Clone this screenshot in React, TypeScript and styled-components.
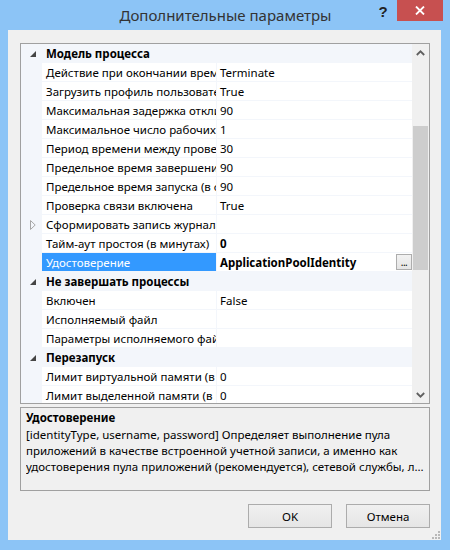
import React from "react";
import styled, { createGlobalStyle, css } from "styled-components";

const Global = createGlobalStyle`
  html, body { margin: 0; padding: 0; background: #ffffff; }
  * { box-sizing: border-box; }
`;

const UI_FONT = `"Noto Sans", "Open Sans", "DejaVu Sans", sans-serif`;

const Window = styled.div`
  width: 450px;
  height: 550px;
  background: #8cc4f6;
  display: flex;
  flex-direction: column;
  font-family: ${UI_FONT};
  color: #000;
`;

const TitleBar = styled.div`
  height: 30px;
  display: grid;
  grid-template-columns: 1fr auto 1fr;
  align-items: start;
  padding: 0 7px 0 8px;
`;

const TitleText = styled.div`
  font-size: 15px;
  line-height: 30px;
  color: #333333;
  white-space: nowrap;
`;

const TitleButtons = styled.div`
  display: flex;
  justify-content: flex-end;
  align-items: flex-start;
`;

const HelpButton = styled.div`
  width: 16px;
  margin-right: 6px;
  margin-top: 3px;
  font-size: 15px;
  font-weight: 700;
  line-height: 18px;
  color: #222;
  text-align: center;
  font-family: "Liberation Sans", Arial, sans-serif;
`;

const CloseButton = styled.div`
  width: 46px;
  height: 21px;
  background: #c75050;
  display: flex;
  align-items: center;
  justify-content: center;
`;

const Client = styled.div`
  position: relative;
  flex: 1;
  margin: 0 9px 10px 8px;
  background: #f0f0f0;
  padding: 13px 11px 12px 12px;
  display: flex;
  flex-direction: column;
`;

const Grid = styled.div`
  height: 361px;
  border: 1px solid #a0a0a0;
  display: flex;
  background: #ffffff;
`;

const Rows = styled.div`
  flex: 1;
  overflow: hidden;
  font-size: 11.5px;
`;

const LINE = "#f3f6fb";

const Row = styled.div`
  height: 19px;
  display: grid;
  grid-template-columns: 21px 175px 1fr;
  background: #ffffff;
`;

const CategoryRowBox = styled.div`
  height: 19px;
  display: grid;
  grid-template-columns: 21px 1fr;
  background: ${LINE};
`;

const Gutter = styled.div`
  background: ${LINE};
  display: flex;
  align-items: center;
  padding-left: 9px;
`;

const CategoryLabel = styled.div`
  font-weight: 700;
  padding: 1px 0 0 4px;
  line-height: 17px;
  white-space: nowrap;
  overflow: hidden;
`;

const NameCell = styled.div<{ $selected?: boolean }>`
  border-bottom: 1px solid ${LINE};
  border-right: 1px solid ${LINE};
  padding: 1px 0 0 4px;
  line-height: 17px;
  white-space: nowrap;
  overflow: hidden;
  ${(p) =>
    p.$selected &&
    css`
      background: #3399ff;
      color: #ffffff;
    `}
`;

const ValueCell = styled.div<{ $bold?: boolean }>`
  border-bottom: 1px solid ${LINE};
  padding: 1px 0 0 3px;
  line-height: 17px;
  white-space: nowrap;
  overflow: hidden;
  display: flex;
  align-items: center;
  justify-content: space-between;
  font-weight: ${(p) => (p.$bold ? 700 : 400)};
`;

const EllipsisButton = styled.div`
  width: 16px;
  height: 16px;
  margin-top: -1px;
  border: 1px solid #adadad;
  background: linear-gradient(#f2f2f2, #e5e5e5);
  font-size: 10px;
  font-weight: 400;
  line-height: 14px;
  text-align: center;
  color: #000;
  letter-spacing: -0.5px;
`;

const ScrollBar = styled.div`
  width: 17px;
  background: #f0f0f0;
  display: flex;
  flex-direction: column;
`;

const ScrollArrow = styled.div`
  height: 17px;
  display: flex;
  align-items: center;
  justify-content: center;
`;

const ScrollTrack = styled.div`
  flex: 1;
  display: flex;
  flex-direction: column;
`;

const Thumb = styled.div`
  margin: 65px 0 0 1px;
  width: 15px;
  height: 144px;
  background: #cdcdcd;
`;

const Description = styled.div`
  margin-top: 3px;
  height: 84px;
  border: 1px solid #a0a0a0;
  background: #f0f0f0;
  padding: 2px 5px 0 5px;
  font-size: 11.5px;
  line-height: 16px;
  color: #000;
`;

const DescTitle = styled.div`
  font-weight: 700;
  margin-bottom: 1px;
`;

const DescLine = styled.div`
  white-space: nowrap;
  overflow: hidden;
  text-overflow: ellipsis;
`;

const ButtonRow = styled.div`
  margin-top: 13px;
  display: flex;
  justify-content: flex-end;
  gap: 14px;
`;

const DialogButton = styled.button`
  width: 84px;
  height: 24px;
  border: 1px solid #acacac;
  background: linear-gradient(#f0f0f0, #e5e5e5);
  font-family: ${UI_FONT};
  font-size: 11.5px;
  color: #000;
  padding: 0;
`;

const Grip = styled.svg`
  position: absolute;
  right: 1px;
  bottom: 1px;
`;

type Item =
  | { kind: "cat"; label: string }
  | {
      kind: "prop";
      name: string;
      value: string;
      bold?: boolean;
      selected?: boolean;
      button?: boolean;
      collapsed?: boolean;
    };

const items: Item[] = [
  { kind: "cat", label: "Модель процесса" },
  { kind: "prop", name: "Действие при окончании времени простоя", value: "Terminate" },
  { kind: "prop", name: "Загрузить профиль пользователя", value: "True" },
  { kind: "prop", name: "Максимальная задержка отклика пинга (в секундах)", value: "90" },
  { kind: "prop", name: "Максимальное число рабочих процессов", value: "1" },
  { kind: "prop", name: "Период времени между проверками связи (в секундах)", value: "30" },
  { kind: "prop", name: "Предельное время завершения работы (в секундах)", value: "90" },
  { kind: "prop", name: "Предельное время запуска (в секундах)", value: "90" },
  { kind: "prop", name: "Проверка связи включена", value: "True" },
  { kind: "prop", name: "Сформировать запись журнала об отключении процесса", value: "", collapsed: true },
  { kind: "prop", name: "Тайм-аут простоя (в минутах)", value: "0", bold: true },
  { kind: "prop", name: "Удостоверение", value: "ApplicationPoolIdentity", bold: true, selected: true, button: true },
  { kind: "cat", label: "Не завершать процессы" },
  { kind: "prop", name: "Включен", value: "False" },
  { kind: "prop", name: "Исполняемый файл", value: "" },
  { kind: "prop", name: "Параметры исполняемого файла", value: "" },
  { kind: "cat", label: "Перезапуск" },
  { kind: "prop", name: "Лимит виртуальной памяти (в КБ)", value: "0" },
  { kind: "prop", name: "Лимит выделенной памяти (в КБ)", value: "0" },
  { kind: "prop", name: "Периодические перезапуски", value: "" },
];

const ExpandedGlyph = () => (
  <svg width="6" height="6" viewBox="0 0 6 6">
    <polygon points="6,0 6,6 0,6" fill="#454545" />
  </svg>
);

const CollapsedGlyph = () => (
  <svg width="6" height="10" viewBox="0 0 6 10">
    <polygon points="0.5,0.5 5.2,5 0.5,9.5" fill="none" stroke="#a6a6a6" strokeWidth="1" />
  </svg>
);

const Chevron = ({ up }: { up?: boolean }) => (
  <svg width="9" height="6" viewBox="0 0 9 6">
    <polyline
      points={up ? "0.8,5 4.5,1.3 8.2,5" : "0.8,1 4.5,4.7 8.2,1"}
      fill="none"
      stroke="#606060"
      strokeWidth="1.8"
    />
  </svg>
);

export default function App() {
  return (
    <>
      <Global />
      <Window>
        <TitleBar>
          <div />
          <TitleText>Дополнительные параметры</TitleText>
          <TitleButtons>
            <HelpButton>?</HelpButton>
            <CloseButton>
              <svg width="10" height="9" viewBox="0 0 10 9">
                <path d="M1 0.5 L9 8.5 M9 0.5 L1 8.5" stroke="#ffffff" strokeWidth="1.8" />
              </svg>
            </CloseButton>
          </TitleButtons>
        </TitleBar>
        <Client>
          <Grid>
            <Rows>
              {items.map((it, i) =>
                it.kind === "cat" ? (
                  <CategoryRowBox key={i}>
                    <Gutter>
                      <ExpandedGlyph />
                    </Gutter>
                    <CategoryLabel>{it.label}</CategoryLabel>
                  </CategoryRowBox>
                ) : (
                  <Row key={i}>
                    <Gutter>{it.collapsed && <CollapsedGlyph />}</Gutter>
                    <NameCell $selected={it.selected}>{it.name}</NameCell>
                    <ValueCell $bold={it.bold}>
                      <span>{it.value}</span>
                      {it.button && <EllipsisButton>...</EllipsisButton>}
                    </ValueCell>
                  </Row>
                )
              )}
            </Rows>
            <ScrollBar>
              <ScrollArrow>
                <Chevron up />
              </ScrollArrow>
              <ScrollTrack>
                <Thumb />
              </ScrollTrack>
              <ScrollArrow>
                <Chevron />
              </ScrollArrow>
            </ScrollBar>
          </Grid>
          <Description>
            <DescTitle>Удостоверение</DescTitle>
            <DescLine>[identityType, username, password] Определяет выполнение пула</DescLine>
            <DescLine>приложений в качестве встроенной учетной записи, а именно как</DescLine>
            <DescLine>
              удостоверения пула приложений (рекомендуется), сетевой службы, локальной системы,
              локальной службы или как удостоверения конкретного пользователя.
            </DescLine>
          </Description>
          <ButtonRow>
            <DialogButton>OK</DialogButton>
            <DialogButton>Отмена</DialogButton>
          </ButtonRow>
          <Grip width="8" height="8" viewBox="0 0 8 8">
            <rect x="6" y="0" width="2" height="2" fill="#b8b8b8" />
            <rect x="3" y="3" width="2" height="2" fill="#b8b8b8" />
            <rect x="6" y="3" width="2" height="2" fill="#b8b8b8" />
            <rect x="0" y="6" width="2" height="2" fill="#b8b8b8" />
            <rect x="3" y="6" width="2" height="2" fill="#b8b8b8" />
            <rect x="6" y="6" width="2" height="2" fill="#b8b8b8" />
          </Grip>
        </Client>
      </Window>
    </>
  );
}
